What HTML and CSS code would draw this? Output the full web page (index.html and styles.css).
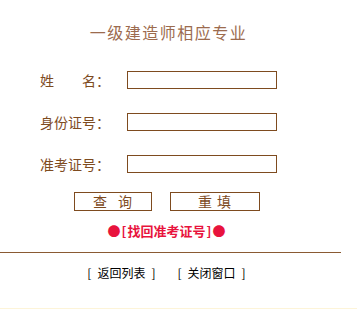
FILE: index.html
```html
<!DOCTYPE html>
<html lang="zh-CN">
<head>
<meta charset="utf-8">
<title>一级建造师相应专业</title>
<link rel="stylesheet" href="styles.css">
</head>
<body>
<div class="page">
  <div class="main">
    <h1 class="title">一级建造师相应专业</h1>
    <form class="form">
      <div class="fields">
        <div class="row">
          <label class="label" for="xm">姓　　名：</label>
          <input class="field" id="xm" type="text">
        </div>
        <div class="row">
          <label class="label" for="sfz">身份证号：</label>
          <input class="field" id="sfz" type="text">
        </div>
        <div class="row">
          <label class="label" for="zkz">准考证号：</label>
          <input class="field" id="zkz" type="text">
        </div>
      </div>
      <div class="buttons">
        <button type="button" class="btn btn-query"><span>查</span><span>询</span></button>
        <button type="reset" class="btn btn-reset"><span>重</span><span>填</span></button>
      </div>
      <div class="find">
        <span class="dot">●</span><span class="br">[</span>找回准考证号<span class="br">]</span><span class="dot">●</span>
      </div>
    </form>
  </div>
  <div class="rule"></div>
  <div class="footer">
    <a class="flink"><span>[</span><span>返回列表</span><span>]</span></a>
    <a class="flink"><span>[</span><span>关闭窗口</span><span>]</span></a>
  </div>
</div>
<div class="strip"></div>
</body>
</html>
```

FILE: styles.css
```css
html, body {
  margin: 0;
  padding: 0;
  background: #ffffff;
}

body {
  font-family: "Noto Sans CJK SC", "Noto Sans", sans-serif;
  color: #7e4b1f;
}

.page {
  height: 308px;
  overflow: hidden;
}

.main {
  width: 333px;
}

.title {
  margin: 0;
  padding-top: 24px;
  padding-left: 4px;
  font-size: 16px;
  line-height: 16px;
  font-weight: normal;
  letter-spacing: 1.5px;
  text-align: center;
  color: #9c6b4e;
}

.form {
  margin: 31px 0 0 0;
  display: flex;
  flex-direction: column;
}

.fields {
  display: flex;
  flex-direction: column;
  gap: 24px;
}

.row {
  display: flex;
  align-items: center;
  height: 18px;
  padding-left: 40px;
}

.label {
  width: 87px;
  font-size: 14px;
  line-height: 18px;
  color: #7e4b1f;
  white-space: nowrap;
}

.field {
  box-sizing: border-box;
  width: 150px;
  height: 18px;
  margin: 0;
  padding: 0 2px;
  border: 1px solid #7e4b1f;
  background: #ffffff;
  outline: none;
}

.buttons {
  display: flex;
  justify-content: center;
  gap: 18px;
  margin-top: 19px;
}

.btn {
  box-sizing: border-box;
  display: flex;
  justify-content: center;
  align-items: center;
  height: 19px;
  margin: 0;
  padding: 0;
  border: 1px solid #7e4b1f;
  background: #ffffff;
  font-family: "Noto Sans CJK SC", sans-serif;
  font-size: 14px;
  line-height: 17px;
  color: #7e4b1f;
}

.btn-query {
  width: 78px;
  gap: 11px;
}

.btn-reset {
  width: 90px;
  gap: 5px;
}

.find {
  margin-top: 13px;
  text-align: center;
  font-size: 13px;
  line-height: 14px;
  font-weight: bold;
  color: #e8133d;
}

.find .br {
  margin: 0 1px;
}

.rule {
  width: 341px;
  height: 1px;
  margin-top: 14px;
  background: #8a5a33;
}

.footer {
  width: 333px;
  margin-top: 13px;
  display: flex;
  justify-content: center;
  gap: 22px;
  font-size: 12px;
  line-height: 14px;
  color: #000000;
}

.flink {
  display: flex;
  gap: 6px;
  color: #000000;
  text-decoration: none;
}

.strip {
  height: 1px;
  background: #fdf4d8;
}
```
